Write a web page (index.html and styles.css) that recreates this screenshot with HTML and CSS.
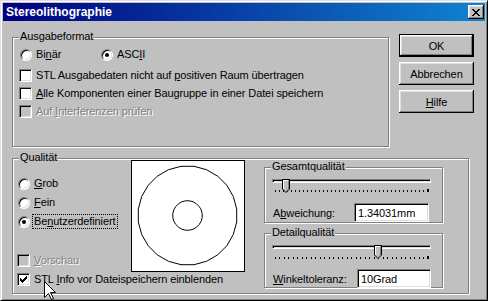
FILE: index.html
```html
<!DOCTYPE html>
<html lang="de">
<head>
<meta charset="utf-8">
<title>Stereolithographie</title>
<link rel="stylesheet" href="styles.css">
</head>
<body>
<div class="window">
  <div class="titlebar">
    <span class="title">Stereolithographie</span>
    <span class="close"><svg width="8" height="7" viewBox="0 0 8 7"><path d="M0 0h2v1h-2zM6 0h2v1h-2zM1 1h2v1h-2zM5 1h2v1h-2zM2 2h4v1h-4zM3 3h2v1h-2zM2 4h4v1h-4zM1 5h2v1h-2zM5 5h2v1h-2zM0 6h2v1h-2zM6 6h2v1h-2z" fill="#000"/></svg></span>
  </div>
  <div class="content">
    <div class="top">
      <div class="group g-format">
        <span class="glabel">Ausgabeformat</span>
        <div class="radio-row">
          <div class="ctl ctl-binaer"><span class="radio"></span><span>Bi<u>n</u>är</span></div>
          <div class="ctl"><span class="radio on"></span><span>ASC<u>I</u>I</span></div>
        </div>
        <div class="ctl row-cb1"><span class="check"></span><span>STL Ausgabedaten nicht auf <u>p</u>ositiven Raum übertragen</span></div>
        <div class="ctl row-cb"><span class="check"></span><span><u>A</u>lle Komponenten einer Baugruppe in einer Datei speichern</span></div>
        <div class="ctl row-cb disabled"><span class="check"></span><span>Auf <u>I</u>nterferenzen prüfen</span></div>
      </div>
      <div class="buttons">
        <div class="btn default"><span class="btn-in">OK</span></div>
        <div class="btn"><span class="btn-in">Abbrechen</span></div>
        <div class="btn"><span class="btn-in"><u>H</u>ilfe</span></div>
      </div>
    </div>
    <div class="group g-quality">
      <span class="glabel">Qualität</span>
      <div class="q-left">
        <div class="ctl q-radio"><span class="radio"></span><span><u>G</u>rob</span></div>
        <div class="ctl q-radio"><span class="radio"></span><span><u>F</u>ein</span></div>
        <div class="ctl q-radio"><span class="radio on"></span><span class="focus">Be<u>n</u>utzerdefiniert</span></div>
        <div class="ctl q-vorschau disabled"><span class="check"></span><span><u>V</u>orschau</span></div>
      </div>
      <div class="preview">
        <svg width="112" height="110" viewBox="0 0 112 110">
          <polygon fill="none" stroke="#000" stroke-width="1" points="104.7,61 101.3,73.5 94.9,84.7 85.7,93.9 74.5,100.3 62,103.7 49,103.7 36.5,100.3 25.3,93.9 16.2,84.7 9.7,73.5 6.3,61 6.3,48 9.7,35.5 16.2,24.3 25.3,15.2 36.5,8.7 49,5.3 62,5.3 74.5,8.7 85.7,15.2 94.9,24.3 101.3,35.5 104.7,48"/>
          <polygon fill="none" stroke="#000" stroke-width="1" points="70.2,56.4 69.2,60.2 67.2,63.5 64.5,66.2 61.2,68.2 57.4,69.2 53.6,69.2 49.8,68.2 46.5,66.2 43.8,63.5 41.8,60.2 40.8,56.4 40.8,52.6 41.8,48.8 43.8,45.5 46.5,42.8 49.8,40.8 53.6,39.8 57.4,39.8 61.2,40.8 64.5,42.8 67.2,45.5 69.2,48.8 70.2,52.6"/>
        </svg>
      </div>
      <div class="q-right">
        <div class="group g-slider">
          <span class="glabel">Gesamtqualität</span>
          <div class="slider">
            <div class="track"></div>
            <svg class="thumb" style="left:10px" width="8" height="14" viewBox="0 0 8 14"><path d="M0.5 0.5H7.5V10L4 13.5L0.5 10Z" fill="#c0c0c0" stroke="#000" stroke-width="1"/><path d="M1.5 10V1.5H6.5" fill="none" stroke="#fff"/><path d="M6.5 1.5V10L4 12.5" fill="none" stroke="#808080"/></svg>
            <div class="ticks"></div>
          </div>
          <div class="field-row">
            <span class="flabel">A<u>b</u>weichung:</span>
            <span class="field f1">1.34031mm</span>
          </div>
        </div>
        <div class="group g-slider g-detail">
          <span class="glabel">Detailqualität</span>
          <div class="slider">
            <div class="track"></div>
            <svg class="thumb" style="left:102px" width="8" height="14" viewBox="0 0 8 14"><path d="M0.5 0.5H7.5V10L4 13.5L0.5 10Z" fill="#c0c0c0" stroke="#000" stroke-width="1"/><path d="M1.5 10V1.5H6.5" fill="none" stroke="#fff"/><path d="M6.5 1.5V10L4 12.5" fill="none" stroke="#808080"/></svg>
            <div class="ticks ticks-b"></div>
          </div>
          <div class="field-row">
            <span class="flabel"><u>W</u>inkeltoleranz:</span>
            <span class="field f2">10Grad</span>
          </div>
        </div>
      </div>
      <div class="ctl q-stl"><span class="check on"><svg width="7" height="7" viewBox="0 0 7 7"><path d="M6 0h1v1h-1zM5 1h2v1h-2zM0 2h1v1h-1zM4 2h3v1h-3zM0 3h2v1h-2zM3 3h3v1h-3zM0 4h5v1h-5zM1 5h3v1h-3zM2 6h1v1h-1z" fill="#000"/></svg></span><span>STL <u>I</u>nfo vor Dateispeichern einblenden</span></div>
    </div>
  </div>
  <svg class="cursor" width="13" height="20" viewBox="0 0 13 20"><path d="M0.5 0.5V16.5L4.5 12.5L7.5 18.5L9.5 17.5L6.5 11.5H11.5Z" fill="#fff" stroke="#000" stroke-width="1"/></svg>
</div>
</body>
</html>
```
FILE: styles.css
```css
* { box-sizing: border-box; }
html, body { margin: 0; padding: 0; }
body {
  width: 488px;
  height: 301px;
  overflow: hidden;
  background: #c0c0c0;
  font-family: "Liberation Sans", Arial, sans-serif;
  font-size: 11px;
  letter-spacing: -0.1px;
  color: #000;
}
u { text-decoration: underline; text-underline-offset: 1px; }

.window {
  position: relative;
  width: 488px;
  height: 301px;
  background: #c0c0c0;
  border: 1px solid;
  border-color: #dfdfdf #000 #000 #dfdfdf;
  box-shadow: inset 1px 1px #fff, inset -1px -1px #808080;
  padding: 2px;
}

.titlebar {
  height: 18px;
  display: flex;
  align-items: center;
  justify-content: space-between;
  padding: 0 1px 0 3px;
  background: linear-gradient(90deg, #000080, #1084d0);
}
.title {
  color: #fff;
  font-weight: bold;
  font-size: 12px;
  letter-spacing: 0;
}
.close {
  width: 16px;
  height: 14px;
  display: flex;
  align-items: center;
  justify-content: center;
  padding: 1px 0 0 0;
  background: #c0c0c0;
  box-shadow: inset -1px -1px #000, inset 1px 1px #fff, inset -2px -2px #808080, inset 2px 2px #dfdfdf;
}
.close svg { display: block; margin-left: -1px; }

.content {
  padding: 13px 0 0 9px;
}
.top {
  display: flex;
  align-items: flex-start;
}

.group {
  position: relative;
  border: 1px solid #808080;
  box-shadow: inset 1px 1px #fff, 1px 1px #fff;
}
.glabel {
  position: absolute;
  top: -8px;
  left: 6px;
  padding: 0 1px;
  background: #c0c0c0;
  line-height: 13px;
  white-space: nowrap;
}

.g-format {
  width: 377px;
  height: 110px;
  margin-top: 3px;
  padding: 9px 0 0 6px;
}

.ctl {
  display: flex;
  align-items: center;
  height: 13px;
  line-height: 13px;
  white-space: nowrap;
}
.ctl > span:last-child { margin-left: 4px; }

.radio-row { display: flex; height: 13px; margin-top: 1px; }
.ctl-binaer { width: 81px; }
.row-cb1 { margin-top: 8px; }
.row-cb { margin-top: 5px; }

.radio {
  position: relative;
  flex: none;
  width: 12px;
  height: 12px;
  margin-left: 1px;
  border-radius: 50%;
  border: 1px solid;
  border-color: #808080 #fff #fff #808080;
  background: #fff;
  box-shadow: inset 1px 1px #000, inset -1px -1px #dfdfdf;
}
.radio.on::after {
  content: "";
  position: absolute;
  left: 3px;
  top: 3px;
  width: 4px;
  height: 4px;
  border-radius: 50%;
  background: #000;
}
.ctl .radio + span { margin-left: 4px; }

.check {
  flex: none;
  width: 13px;
  height: 13px;
  display: flex;
  align-items: center;
  justify-content: center;
  border: 1px solid;
  border-color: #808080 #fff #fff #808080;
  background: #fff;
  box-shadow: inset 1px 1px #000, inset -1px -1px #dfdfdf;
}
.check svg { display: block; }
.disabled .check { background: #c0c0c0; }
.disabled > span:last-child {
  color: #808080;
  text-shadow: 1px 1px #fff;
}

.buttons {
  display: flex;
  flex-direction: column;
  gap: 5px;
  margin-left: 10px;
  width: 75px;
}
.btn {
  height: 23px;
  display: flex;
  background: #c0c0c0;
}
.btn-in {
  flex: 1;
  display: flex;
  align-items: center;
  justify-content: center;
  box-shadow: inset -1px -1px #000, inset 1px 1px #fff, inset -2px -2px #808080, inset 2px 2px #dfdfdf;
}
.btn.default { border: 1px solid #000; }

.g-quality {
  width: 457px;
  height: 136px;
  margin-top: 11px;
  padding: 1px 0 0 4px;
  display: grid;
  grid-template-columns: 114px 114px 179px;
  grid-template-rows: 112px 14px;
  column-gap: 0;
}
.q-left {
  grid-column: 1;
  grid-row: 1;
  display: flex;
  flex-direction: column;
  padding-top: 17px;
}
.q-radio + .q-radio { margin-top: 6px; }
.focus {
  outline: 1px dotted #000;
  outline-offset: 0;
  padding: 0 1px;
  margin-left: 3px !important;
}
.q-vorschau { margin-top: auto; margin-bottom: 5px; }

.preview {
  grid-column: 2;
  grid-row: 1;
  width: 114px;
  height: 112px;
  border: 1px solid #000;
  background: #fff;
}
.preview svg { display: block; }

.q-right {
  grid-column: 3;
  grid-row: 1 / 3;
  margin-left: 19px;
  padding-top: 7px;
  display: flex;
  flex-direction: column;
  gap: 10px;
}
.g-slider {
  width: 179px;
  height: 56px;
  padding: 8px 0 0 7px;
}
.g-detail { height: 55px; }

.slider {
  position: relative;
  height: 17px;
}
.track {
  margin-top: 3px;
  width: 159px;
  height: 4px;
  border: 1px solid;
  border-color: #808080 #fff #fff #808080;
  box-shadow: inset 1px 1px #000;
  background: #dfdfdf;
}
.thumb {
  position: absolute;
  top: 0;
  display: block;
}
.ticks {
  margin-top: 6px;
  margin-left: 3px;
  width: 154px;
  height: 3px;
  background:
    linear-gradient(#000, #000) right 0 / 2px 3px no-repeat,
    repeating-linear-gradient(90deg, #000 0 1px, transparent 1px 4px) left bottom / 100% 2px no-repeat;
}
.ticks-b {
  margin-top: 7px;
  background:
    linear-gradient(#000, #000) right 0 / 2px 3px no-repeat,
    repeating-linear-gradient(90deg, #000 0 1px, transparent 1px 4.5px) left bottom / 100% 2px no-repeat;
}

.field-row {
  display: flex;
  align-items: center;
  margin-top: 7px;
}
.flabel { width: 82px; padding-left: 1px; }
.field {
  height: 19px;
  width: 75px;
  display: flex;
  align-items: center;
  padding: 1px 0 0 3px;
  background: #fff;
  border: 1px solid;
  border-color: #808080 #fff #fff #808080;
  box-shadow: inset 1px 1px #000, inset -1px -1px #dfdfdf;
}
.f2 { margin-left: 3px; width: 74px; }

.q-stl {
  grid-column: 1 / 3;
  grid-row: 2;
  margin-top: 1px;
}

.cursor {
  position: absolute;
  left: 43px;
  top: 280px;
  display: block;
}
```
